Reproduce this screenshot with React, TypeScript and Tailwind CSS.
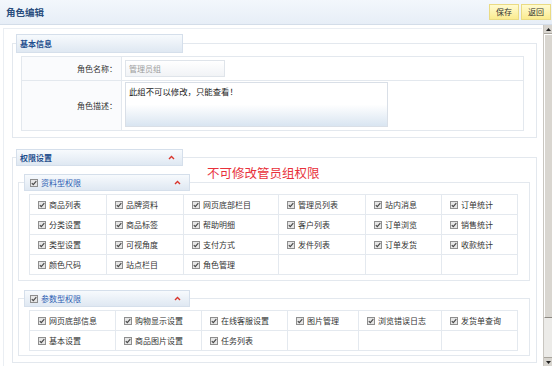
import React from 'react'

// grey, already-ticked (disabled) checkbox
function Tick() {
  return (
    <svg width="8" height="8" viewBox="0 0 8 8" className="shrink-0">
      <rect x="0.5" y="0.5" width="7" height="7" fill="#e6e6e6" stroke="#8e8e8e" />
      <path d="M1.8 4.1 L3.3 5.6 L6.3 2.2" stroke="#4a4a4a" strokeWidth="1.2" fill="none" />
    </svg>
  )
}

function Caret() {
  return (
    <svg width="7" height="5" viewBox="0 0 7 5" className="shrink-0">
      <path d="M1 4 L3.5 1.5 L6 4" stroke="#d9342b" strokeWidth="1.4" fill="none" />
    </svg>
  )
}

const dataPerms = [
  ['商品列表', '品牌资料', '网页底部栏目', '管理员列表', '站内消息', '订单统计'],
  ['分类设置', '商品标签', '帮助明细', '客户列表', '订单浏览', '销售统计'],
  ['类型设置', '可视角度', '支付方式', '发件列表', '订单发货', '收款统计'],
  ['颜色尺码', '站点栏目', '角色管理', '', '', ''],
]

const paramPerms = [
  ['网页底部信息', '购物显示设置', '在线客服设置', '图片管理', '浏览错误日志', '发货单查询'],
  ['基本设置', '商品图片设置', '任务列表', '', '', ''],
]

function PermGrid({ rows, cols }: { rows: string[][]; cols: string }) {
  return (
    <div className={`ml-[10px] mt-[3px] grid ${cols} border-l border-t border-[#e4e9ef] w-[489px]`}>
      {rows.flat().map((name, i) => (
        <div key={i} className="h-[20px] border-r border-b border-[#e4e9ef] flex items-center pl-[8px] gap-[3px]">
          {name && <Tick />}
          {name && <span className="text-[8px] text-[#333] leading-none">{name}</span>}
        </div>
      ))}
    </div>
  )
}

function TabHead({ children, className }: { children: React.ReactNode; className: string }) {
  return (
    <div
      className={`flex items-center justify-between border border-[#d5dfeb] bg-gradient-to-b from-[#f7fafd] to-[#dfe8f2] ${className}`}
    >
      {children}
    </div>
  )
}

export default function App() {
  return (
    <div className="w-[552px] h-[366px] overflow-hidden bg-white flex flex-col font-['Noto_Sans_CJK_SC','Noto_Sans',sans-serif]">
      {/* title bar */}
      <div className="h-[25px] shrink-0 flex items-center justify-between border-b border-[#d3dde9] bg-gradient-to-b from-[#f3f7fc] to-[#e7eef7] pl-[6px] pr-[1px]">
        <span className="text-[9.5px] font-bold text-[#2a4d7d]">角色编辑</span>
        <div className="flex gap-[2px]">
          <button className="w-[30px] h-[16px] border border-[#eadb84] bg-gradient-to-b from-[#fffbd0] to-[#fbeb8e] text-[8px] text-[#333] leading-none">
            保存
          </button>
          <button className="w-[30px] h-[16px] border border-[#eadb84] bg-gradient-to-b from-[#fffbd0] to-[#fbeb8e] text-[8px] text-[#333] leading-none">
            返回
          </button>
        </div>
      </div>

      <div className="flex flex-1 min-h-0">
        {/* content */}
        <div className="flex-1 min-w-0">
          <div className="ml-[3px] mr-[1px] mt-[3px] border-l border-t border-[#eaeef3] h-[400px]">
            {/* 基本信息 */}
            <section className="ml-[8px] mt-[14px] w-[525px] border border-[#e3e8ee] pb-[6px]">
              <TabHead className="-mt-[10px] ml-[3px] w-[167px] h-[19px] pl-[3px]">
                <span className="text-[8px] font-bold text-[#1f4f8e] leading-none">基本信息</span>
              </TabHead>
              <div className="ml-[8px] mt-[3px] w-[503px] border border-[#e3e8ee] grid grid-cols-[100px_1fr]">
                <div className="h-[24px] border-r border-b border-[#e3e8ee] bg-[#fafbfd] flex items-center justify-end pr-[4px] text-[8px] text-[#333]">
                  角色名称：
                </div>
                <div className="h-[24px] border-b border-[#e3e8ee] flex items-center pl-[3px]">
                  <div className="w-[100px] h-[17px] border border-[#dfe4ea] bg-gradient-to-b from-white to-[#f1f3f6] flex items-center pl-[3px] text-[8px] text-[#9c9c9c]">
                    管理员组
                  </div>
                </div>
                <div className="h-[49px] border-r border-[#e3e8ee] bg-[#fafbfd] flex items-center justify-end pr-[4px] text-[8px] text-[#333]">
                  角色描述：
                </div>
                <div className="h-[49px] pl-[3px] pt-[1px]">
                  <div className="w-[263px] h-[45px] border border-[#d9dfe7] bg-gradient-to-b from-white via-white to-[#d9e5f1] px-[3px] pt-[3px] text-[8.4px] text-[#222] leading-[11px]">
                    此组不可以修改，只能查看！
                  </div>
                </div>
              </div>
            </section>

            {/* 权限设置 */}
            <section className="ml-[8px] mt-[19px] w-[525px] border border-[#e3e8ee] pb-[6px]">
              <div className="flex items-start -mt-[9px]">
                <TabHead className="ml-[3px] w-[167px] h-[17px] pl-[3px] pr-[7px]">
                  <span className="text-[8px] font-bold text-[#1f4f8e] leading-none">权限设置</span>
                  <Caret />
                </TabHead>
                <div className="ml-[24px] mt-[15px] text-[12.5px] leading-[17px] text-[#e8313b]">不可修改管员组权限</div>
              </div>

              {/* 资料型权限 */}
              <div className="ml-[5px] mt-[1px] w-[512px] border border-[#e3e8ee] pb-[5px]">
                <TabHead className="-mt-[9px] ml-[5px] w-[166px] h-[17px] pl-[5px] pr-[8px]">
                  <span className="flex items-center gap-[3px]">
                    <Tick />
                    <span className="text-[8px] text-[#2f5fb3] leading-none">资料型权限</span>
                  </span>
                  <Caret />
                </TabHead>
                <PermGrid rows={dataPerms} cols="grid-cols-[77px_77px_95px_87px_76px_76px]" />
              </div>

              {/* 参数型权限 */}
              <div className="ml-[5px] mt-[17px] w-[512px] border border-[#e3e8ee] pb-[4px]">
                <TabHead className="-mt-[9px] ml-[5px] w-[166px] h-[17px] pl-[5px] pr-[8px]">
                  <span className="flex items-center gap-[3px]">
                    <Tick />
                    <span className="text-[8px] text-[#2f5fb3] leading-none">参数型权限</span>
                  </span>
                  <Caret />
                </TabHead>
                <PermGrid rows={paramPerms} cols="grid-cols-[86px_86px_86px_71px_83px_76px]" />
              </div>
            </section>
          </div>
        </div>

        {/* scrollbar */}
        <div className="w-[9px] shrink-0 flex flex-col bg-[#ecebe8] border-l border-[#c9c6c0]">
          <div className="h-[9px] flex items-center justify-center bg-[#d8d5cf] border-b border-[#a9a59d]">
            <svg width="5" height="3" viewBox="0 0 5 3"><path d="M0 3 L2.5 0 L5 3 Z" fill="#222" /></svg>
          </div>
          <div className="h-[284px] bg-[#d9d6d0] border-t border-l border-white border-b border-b-[#8d8982]" />
          <div className="flex-1" />
          <div className="h-[9px] flex items-center justify-center bg-[#d8d5cf] border-t border-[#a9a59d]">
            <svg width="5" height="3" viewBox="0 0 5 3"><path d="M0 0 L2.5 3 L5 0 Z" fill="#222" /></svg>
          </div>
        </div>
      </div>
    </div>
  )
}
